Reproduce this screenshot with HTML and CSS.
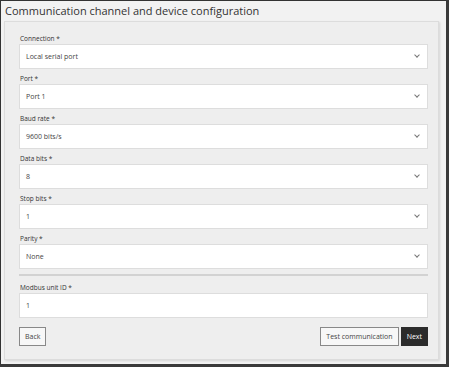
FILE: index.html
```html
<!DOCTYPE html>
<html lang="en">
<head>
    <meta charset="UTF-8">
    <title>Communication channel and device configuration</title>
    <link rel="stylesheet" href="styles.css">
</head>
<body>
    <div class="window">
        <h1 class="title">Communication channel and device configuration</h1>
        <div class="panel">
            <div class="field">
                <label>Connection *</label>
                <div class="select">Local serial port<span class="chevron"></span></div>
            </div>
            <div class="field">
                <label>Port *</label>
                <div class="select">Port 1<span class="chevron"></span></div>
            </div>
            <div class="field">
                <label>Baud rate *</label>
                <div class="select">9600 bits/s<span class="chevron"></span></div>
            </div>
            <div class="field">
                <label>Data bits *</label>
                <div class="select">8<span class="chevron"></span></div>
            </div>
            <div class="field">
                <label>Stop bits *</label>
                <div class="select">1<span class="chevron"></span></div>
            </div>
            <div class="field">
                <label>Parity *</label>
                <div class="select">None<span class="chevron"></span></div>
            </div>
            <hr class="divider">
            <div class="field">
                <label>Modbus unit ID *</label>
                <div class="input">1</div>
            </div>
            <div class="actions">
                <button class="btn">Back</button>
                <div class="right">
                    <button class="btn">Test communication</button>
                    <button class="btn btn-dark">Next</button>
                </div>
            </div>
        </div>
    </div>
</body>
</html>
```

FILE: styles.css
```css
* {
    margin: 0;
    padding: 0;
    box-sizing: border-box;
}

body {
    font-family: 'Open Sans', 'Noto Sans', sans-serif;
    background: #3a3a3a;
    color: #333;
}

.window {
    width: 446px;
    height: 364px;
    background: #f2f2f2;
    border-top: 1px solid #333;
    border-left: 1px solid #333;
    padding: 0 3px;
}

.title {
    font-size: 11px;
    font-weight: normal;
    color: #333;
    padding-left: 1px;
    line-height: 19px;
}

.panel {
    background: #eeeeee;
    border: 1px solid #dcdcdc;
    box-shadow: 1px 1px 2px rgba(0,0,0,0.12);
    margin-top: 1px;
    margin-right: 4px;
    padding: 12px 10px 0 14px;
    height: 339px;
}

.field {
    margin-bottom: 5px;
}

.field label {
    display: block;
    font-size: 6.5px;
    line-height: 10px;
    padding-left: 1px;
}

.select,
.input {
    display: flex;
    align-items: center;
    justify-content: space-between;
    height: 25px;
    background: #fff;
    border: 1px solid #dddddd;
    font-size: 7px;
    padding: 0 8px 0 6px;
    color: #444;
}

.chevron {
    width: 4px;
    height: 4px;
    border-right: 1px solid #777;
    border-bottom: 1px solid #777;
    transform: rotate(45deg);
    margin-top: -3px;
}

.divider {
    border: none;
    border-top: 2px solid #d2d2d2;
    margin: 2px 0 7px;
}

.actions {
    display: flex;
    justify-content: space-between;
    margin-top: 9px;
}

.right {
    display: flex;
    gap: 2px;
}

.btn {
    font-family: inherit;
    font-size: 7px;
    height: 19px;
    padding: 0 5px;
    background: #f7f7f7;
    border: 1px solid #888;
    color: #444;
}

.btn-dark {
    background: #2b2b2b;
    border-color: #2b2b2b;
    color: #fff;
    padding: 0 5px;
}
```
